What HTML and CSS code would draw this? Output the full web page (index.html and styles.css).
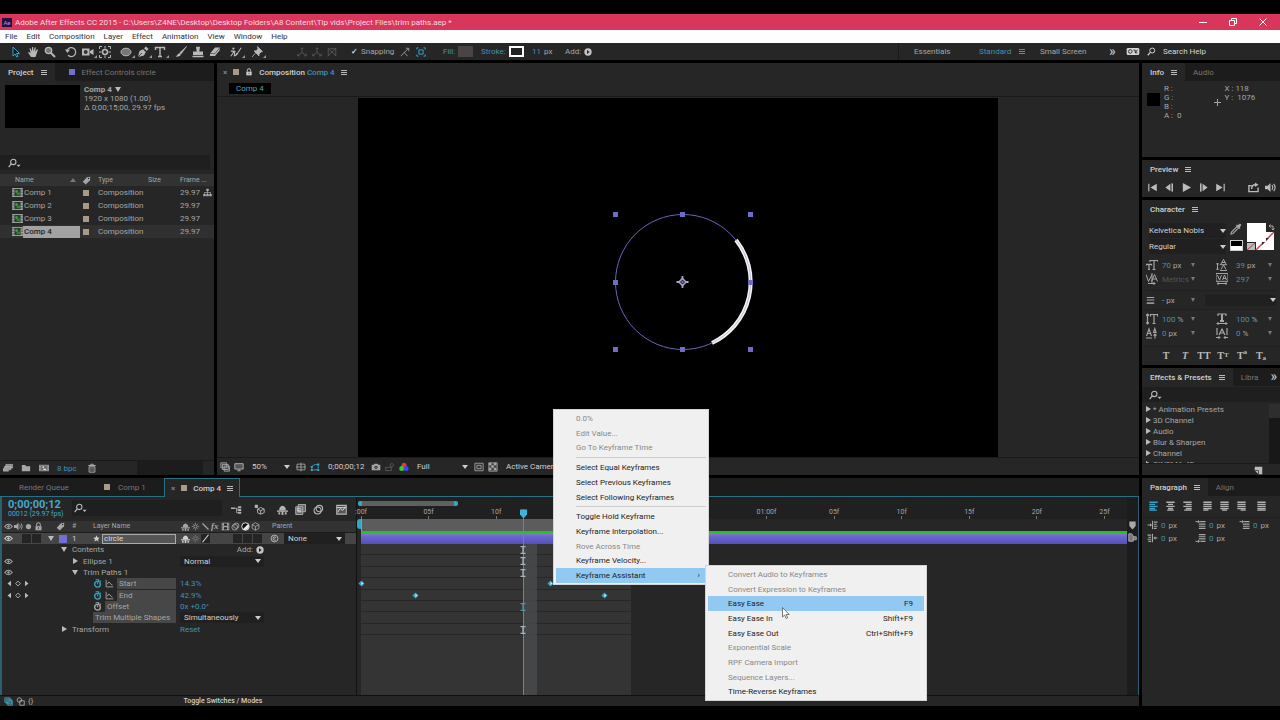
FILE: index.html
```html
<!DOCTYPE html>
<html lang="en">
<head>
  <meta charset="UTF-8" />
  <meta name="viewport" content="width=device-width, initial-scale=1.0"/>
  <title>Adobe After Effects CC 2015</title>
  <link rel="stylesheet" href="styles.css">
</head>
<body>
  <!-- icon sprite -->
  <svg class="sprite" aria-hidden="true">
    <symbol id="i-arrow" viewBox="0 0 12 12"><path d="M3 1v9l2.200-2 1.500 3 1.300-.7-1.500-2.800h3z" fill="#111" stroke="currentColor"/></symbol>
    <symbol id="i-hand" viewBox="0 0 12 12"><path d="M4 11L1 6.500l1-.6L3.600 7.300 2.500 2.500l1-.3L5 5.500V1h1.100l.4 4.300L7.800 1.300l1 .2-.6 4.300 1.900-2.600.9.500L9.500 8 8.500 11z" fill="currentColor"/></symbol>
    <symbol id="i-zoom" viewBox="0 0 12 12"><circle cx="4.500" cy="4.500" r="3.200" fill="#777" stroke="currentColor" stroke-width="1.300"/><path d="M7 7l4 4" stroke="currentColor" stroke-width="2"/></symbol>
    <symbol id="i-rotate" viewBox="0 0 12 12"><path d="M2.500 3.500A4.500 4.500 0 1 1 3 9.300" fill="none" stroke="currentColor" stroke-width="1.200"/><path d="M0 3.500h5L2.500 7z" fill="currentColor"/></symbol>
    <symbol id="i-camera" viewBox="0 0 12 12"><path d="M0 2.500h7.500v7H0zM8 5l3.500-2v6L8 7z" fill="currentColor"/><circle cx="3.700" cy="6" r="2" fill="#333"/></symbol>
    <symbol id="i-anchor" viewBox="0 0 12 12"><path d="M.5 3V.5H3M9 .5h2.500V3M11.500 9v2.500H9M3 11.500H.5V9" fill="none" stroke="currentColor"/><circle cx="6" cy="6" r="2.500" fill="none" stroke="currentColor" stroke-width="1.500"/><path d="M6 0v2.500M6 9.500V12M0 6h2.500M9.500 6H12" stroke="currentColor"/></symbol>
    <symbol id="i-ellipse" viewBox="0 0 12 12"><ellipse cx="6" cy="6" rx="5" ry="3.800" fill="#777" stroke="currentColor"/></symbol>
    <symbol id="i-pen" viewBox="0 0 12 12"><path d="M1 11l1.500-6L6 3.200 8.800 6 7 9.500z" fill="currentColor"/><path d="M7 2.200L9 .5 11.500 3 9.800 5z" fill="currentColor"/><path d="M1 11l4-4" stroke="#262626" stroke-width=".8"/></symbol>
    <symbol id="i-type" viewBox="0 0 12 12"><path d="M1.500 4V1.500h9V4M6 1.500v9M4 10.500h4" fill="none" stroke="currentColor" stroke-width="1.400"/></symbol>
    <symbol id="i-brush" viewBox="0 0 12 12"><path d="M11.500.5L6 8 4.800 6.800z" fill="currentColor" stroke="currentColor" stroke-width=".7"/><path d="M4.500 7.200L6 8.700C4.500 11 2.500 10.600.5 10.600 2.500 9.700 2.300 7.700 4.500 7.200z" fill="currentColor"/></symbol>
    <symbol id="i-stamp" viewBox="0 0 12 12"><path d="M4 .8h4L7.300 5.500H11V9H1V5.500h3.700zM.5 9.800h11v1.400H.5z" fill="currentColor"/></symbol>
    <symbol id="i-eraser" viewBox="0 0 12 12"><path d="M1 7.500L6 1.500h5l-.5 3L6 10H1z" fill="currentColor"/><path d="M1 7.500h5L11 1.500" stroke="#444" stroke-width=".7" fill="none"/></symbol>
    <symbol id="i-roto" viewBox="0 0 14 12"><circle cx="4" cy="2" r="1.300" fill="currentColor"/><path d="M1 5h3.500L3 8 1 11M4.500 5L5.500 8 5 11M4 5l2.500.8M13 1L8.500 8 6 10.500" stroke="currentColor" stroke-width="1.300" fill="none"/><path d="M7.500 7l1.500 1.500L6 11z" fill="currentColor"/></symbol>
    <symbol id="i-pin" viewBox="0 0 12 12"><path d="M6.500.5l5 5-1.500.5-2 2v2L3 5l2.500-.3L7 2.500zM4.500 7L1 11" fill="currentColor" stroke="currentColor" stroke-width=".8"/></symbol>
    <symbol id="i-axis" viewBox="0 0 12 12"><path d="M6 1v5.500L1.500 10M6 6.500L10.500 10M4.500 2.500L6 .8l1.500 1.700M.8 8v2.600h2.600M11.200 8v2.600H8.600" fill="none" stroke="currentColor"/></symbol>
    <symbol id="i-axis-box" viewBox="0 0 12 12"><path d="M1.500 1v9.500M1 1l5 5-5 5M6 6l5-5M6 6l5 5M10.500 1v9.500M3.500 2h6" fill="none" stroke="currentColor"/></symbol>
    <symbol id="i-snap" viewBox="0 0 12 12"><path d="M1 11l4-4.500L9 11M5 6.500L10 2M7 1.500h3.500V5" fill="none" stroke="currentColor"/></symbol>
    <symbol id="i-snapbox" viewBox="0 0 12 12"><path d="M1 3V1h2M9 1h2v2M11 9v2H9M3 11H1V9M3.500 3.500h5v5h-5z" fill="none" stroke="currentColor" stroke-width="1.200"/></symbol>
    <symbol id="i-go" viewBox="0 0 12 12"><circle cx="6" cy="6" r="5.500" fill="currentColor"/><path d="M4.500 3L8.500 6l-4 3z" fill="#262626"/></symbol>
    <symbol id="i-sync" viewBox="0 0 14 10"><rect x="0" y="1" width="14" height="8" rx="1.500" fill="currentColor"/><circle cx="4" cy="5" r="2" fill="none" stroke="#222"/><path d="M7.500 3.500h2v3M12 3L9.500 6.500H12" fill="none" stroke="#222"/></symbol>
    <symbol id="i-search" viewBox="0 0 12 12"><circle cx="7" cy="4.700" r="3.300" fill="none" stroke="currentColor" stroke-width="1.300"/><path d="M4.500 7.200L1 11" stroke="currentColor" stroke-width="1.500"/></symbol>
    <symbol id="i-find" viewBox="0 0 16 12"><circle cx="6.500" cy="4.700" r="3.300" fill="none" stroke="currentColor" stroke-width="1.300"/><path d="M4 7.200L.8 11" stroke="currentColor" stroke-width="1.500"/><path d="M10.500 8h5L13 11z" fill="currentColor"/></symbol>
    <symbol id="i-menu" viewBox="0 0 6 7"><path d="M0 1.500h6M0 3.500h6M0 5.500h6" stroke="currentColor"/></symbol>
    <symbol id="i-lock" viewBox="0 0 12 12"><path d="M2 5.500h8V11H2z" fill="currentColor"/><path d="M3.500 5.500V3.500a2.400 2.400 0 0 1 4.900 0V5.500" fill="none" stroke="currentColor" stroke-width="1.400"/><path d="M6 7v2.300" stroke="#262626"/></symbol>
    <symbol id="i-comp" viewBox="0 0 12 10"><path d="M0 0h12v10H0z" fill="#a5a5a5"/><path d="M2.500 1h7v8h-7z" fill="#24402c"/><circle cx="5" cy="4" r="1.500" fill="#4fa04a"/><path d="M5 5h4v3H5z" fill="#377c39"/><path d="M1 1v8M11 1v8" stroke="#333" stroke-dasharray="1.500 1.500"/></symbol>
    <symbol id="i-tag" viewBox="0 0 12 12"><path d="M1 7.500L6.500 1.500 11 1l-.3 4.500L5 11.300z" fill="currentColor"/><circle cx="8.800" cy="3.300" r=".9" fill="#262626"/></symbol>
    <symbol id="i-flow" viewBox="0 0 12 12"><path d="M4.300 1h3.400v3H4.300zM.3 8h3.400v3H.3zM8.300 8h3.400v3H8.300zM4.300 8h3.400v3H4.300z" fill="currentColor"/><path d="M6 4v4M2 8V6h8v2" stroke="currentColor" fill="none"/></symbol>
    <symbol id="i-footage" viewBox="0 0 14 12"><path d="M4 1h9.500v5H4zM2 4h9v4.500H2z" fill="#888" stroke="#ccc" stroke-width=".8"/><path d="M0 6.500h4v2h4V11H0z" fill="currentColor"/></symbol>
    <symbol id="i-folder" viewBox="0 0 12 12"><path d="M1 2.500h4L6.200 4H11v6H1z" fill="currentColor"/></symbol>
    <symbol id="i-newcomp" viewBox="0 0 14 12"><path d="M0 1.500h14v9H0z" fill="currentColor"/><path d="M3 2.500h8v7H3z" fill="#666"/><path d="M1.500 2v8M12.500 2v8" stroke="#333" stroke-dasharray="1.500 1.500"/><circle cx="6" cy="5" r="1.300" fill="#ddd"/><path d="M6 7h4v2H6z" fill="#ddd"/></symbol>
    <symbol id="i-trash" viewBox="0 0 12 12"><path d="M1.500 3h9M4.500 2.500v-1h3v1M2.500 4.500h7V11h-7z" fill="none" stroke="currentColor" stroke-width="1.200"/><path d="M4.500 5v5M6 5v5M7.500 5v5" stroke="currentColor" stroke-width=".7"/></symbol>
    <symbol id="i-layers" viewBox="0 0 12 12"><path d="M1 1h7v6H1zM3 3h7v6H3zM5 5h6.500v6H5z" fill="#444" stroke="currentColor"/></symbol>
    <symbol id="i-monitor" viewBox="0 0 12 12"><path d="M1 2h10v6.500H1zM4 10.500h4M6 8.500v2" fill="#555" stroke="currentColor" stroke-width="1.200"/></symbol>
    <symbol id="i-grid" viewBox="0 0 14 12"><path d="M1.500 2h11v8h-11zM7 0v12M0 6h14" fill="none" stroke="currentColor" stroke-width="1.200"/></symbol>
    <symbol id="i-mask" viewBox="0 0 14 12"><path d="M2.500 10V6Q4 2.500 8 2.500h3.500V10z" fill="none" stroke="currentColor" stroke-width="1.200"/><path d="M1 9h3v2.500H1zM10 9h3v2.500h-3zM10 1.200h3V4h-3zM1 4.500h3V7H1z" fill="currentColor"/></symbol>
    <symbol id="i-photo" viewBox="0 0 14 12"><path d="M1 3h3l1-1.500h4L10 3h3v7.500H1z" fill="currentColor"/><circle cx="7" cy="6.500" r="2.400" fill="#333"/><circle cx="7" cy="6.500" r="1" fill="currentColor"/></symbol>
    <symbol id="i-ghost" viewBox="0 0 14 12"><circle cx="9.500" cy="3.500" r="2.300" fill="none" stroke="currentColor"/><path d="M1 6.500h8v4.500H1z" fill="none" stroke="currentColor"/></symbol>
    <symbol id="i-rgb" viewBox="0 0 12 12"><circle cx="6" cy="3.800" r="3" fill="#e33"/><circle cx="3.300" cy="7.800" r="3" fill="#3c3"/><circle cx="8.500" cy="7.800" r="3" fill="#44e"/></symbol>
    <symbol id="i-region" viewBox="0 0 12 12"><path d="M1 1.500h10v9H1z" fill="#333" stroke="currentColor"/><path d="M3.500 4h5v4h-5z" fill="none" stroke="currentColor"/></symbol>
    <symbol id="i-checker" viewBox="0 0 12 12"><path d="M1 1h10v10H1z" fill="#444" stroke="currentColor"/><path d="M1 1h3v3H1zM7 1h3v3H7zM4 4h3v3H4zM1 7h3v3H1zM7 7h3v3H7z" fill="currentColor"/></symbol>
    <symbol id="i-eye" viewBox="0 0 12 12"><path d="M1 6q5-6 10 0-5 6-10 0z" fill="none" stroke="currentColor" stroke-width="1.500"/><circle cx="6" cy="6" r="1.600" fill="currentColor"/></symbol>
    <symbol id="i-speaker" viewBox="0 0 12 12"><path d="M0 4h3l3-3v10L3 8H0z" fill="currentColor"/><path d="M7.500 3.500q2 2.500 0 5M9.500 2q3 4 0 8" fill="none" stroke="currentColor" stroke-width="1.200"/></symbol>
    <symbol id="i-solo" viewBox="0 0 12 12"><circle cx="6" cy="6" r="3.500" fill="currentColor"/></symbol>
    <symbol id="i-star" viewBox="0 0 12 12"><path d="M6 .5l1.600 3.700 4 .3-3 2.700.9 4L6 9.100l-3.500 2.100.9-4-3-2.700 4-.3z" fill="currentColor"/></symbol>
    <symbol id="i-shy" viewBox="0 0 12 12"><path d="M0 7h12v1.500H0z" fill="currentColor"/><path d="M2.500 7V4.500Q6-.5 9.500 4.500V7zM5 8h2v4H5zM1.500 9h2v2.500h-2zM8.500 9h2v2.500h-2z" fill="currentColor"/></symbol>
    <symbol id="i-sun" viewBox="0 0 12 12"><circle cx="6" cy="6" r="2.200" fill="none" stroke="currentColor" stroke-width="1.200"/><path d="M6 1v1.500M6 9.500V11M1 6h1.500M9.500 6H11M2.500 2.500l1 1M8.500 8.500l1 1M9.500 2.500l-1 1M2.500 9.500l1-1" stroke="currentColor"/></symbol>
    <symbol id="i-slash" viewBox="0 0 12 12"><path d="M10 1L2 11" stroke="currentColor" stroke-width="1.600"/></symbol>
    <symbol id="i-backslash" viewBox="0 0 12 12"><path d="M2 2l8 8" stroke="currentColor" stroke-width="1.600"/></symbol>
    <symbol id="i-film" viewBox="0 0 12 12"><path d="M1 1h10v10H1z" fill="currentColor"/><path d="M4 2h4v3H4zM4 7h4v3H4z" fill="#222"/><path d="M2.300 2v8M9.700 2v8" stroke="#222" stroke-dasharray="1 1"/></symbol>
    <symbol id="i-blur" viewBox="0 0 12 12"><circle cx="7" cy="5" r="3.500" fill="none" stroke="currentColor" stroke-width="1.200"/><circle cx="5" cy="7" r="3.800" fill="none" stroke="currentColor" stroke-width="1.200"/></symbol>
    <symbol id="i-half" viewBox="0 0 12 12"><circle cx="6" cy="6" r="5" fill="#111" stroke="#eee" stroke-width="1.200"/><path d="M2.500 9.500A5 5 0 0 0 9.500 2.500z" fill="#eee"/></symbol>
    <symbol id="i-cube" viewBox="0 0 12 12"><path d="M6 1l4.500 2.500v5L6 11 1.500 8.500v-5zM1.500 3.500L6 6l4.500-2.500M6 6v5" fill="none" stroke="currentColor" stroke-width="1.100"/></symbol>
    <symbol id="i-tree" viewBox="0 0 14 12"><path d="M0 3.500h5v2H0zM9 2h4v2.500H9zM9 5.500h4V8H9zM9 9h4v2.500H9z" fill="currentColor"/><path d="M5 4.500h4M7 4.500v5.700h2M7 6.700h2" fill="none" stroke="currentColor"/></symbol>
    <symbol id="i-draft" viewBox="0 0 14 14"><path d="M8.500 4.500l4.500 2v4.500l-4.500 2-4-2V6.500zM4.500 6.500l4 2 4.500-2M8.500 8.500V13" fill="none" stroke="currentColor" stroke-width="1.200"/><path d="M1 1h4v4H1z" fill="currentColor"/></symbol>
    <symbol id="i-frames" viewBox="0 0 12 12"><path d="M3.500.5h8v8h-8zM.8 3h7.700v8.500H.8z" fill="#666" stroke="currentColor"/><path d="M2.500 5h4v2h-4zM2.500 8.500h4" stroke="#ddd" fill="none" stroke-width=".8"/></symbol>
    <symbol id="i-graph" viewBox="0 0 12 12"><path d="M.8 1.500h10.400v9.500H.8z" fill="#555" stroke="currentColor" stroke-width="1.200"/><path d="M2 9q3-6 4-3t4-3M1 4h10" fill="none" stroke="#ddd"/></symbol>
    <symbol id="i-watch" viewBox="0 0 12 12"><circle cx="6" cy="7" r="3.800" fill="none" stroke="currentColor" stroke-width="1.800"/><path d="M6 7V4.500M3.500 1h4v2M9 2l1.500 1.500" stroke="currentColor" stroke-width="1.400" fill="none"/></symbol>
    <symbol id="i-curve" viewBox="0 0 12 12"><path d="M1.500 1v9.500H11M3 7q2-5 3.500-2T10 8" fill="none" stroke="currentColor" stroke-width="1.200"/></symbol>
    <symbol id="i-spiral" viewBox="0 0 12 12"><circle cx="6" cy="6" r="4.500" fill="none" stroke="currentColor"/><path d="M6 6q2-1 1-2-3-1-3 2t3.500 2.500" fill="none" stroke="currentColor"/></symbol>
    <symbol id="i-kfnav" viewBox="0 0 24 8"><path d="M4 .8v6.400L0 4zM20 .8v6.400L24 4z" fill="currentColor"/><path d="M12 1.300L14.700 4 12 6.700 9.300 4z" fill="none" stroke="currentColor"/></symbol>
    <symbol id="i-modes" viewBox="0 0 12 12"><circle cx="4.500" cy="4" r="3" fill="none" stroke="currentColor" stroke-width="1.200"/><path d="M5 5h6v6H5z" fill="none" stroke="currentColor" stroke-width="1.200"/></symbol>
    <symbol id="i-switch" viewBox="0 0 12 12"><path d="M1 1h4l2 3v7H1zM7 5h4v4H7" fill="#777" stroke="currentColor" stroke-width="1.200"/></symbol>
    <symbol id="i-first" viewBox="0 0 12 12"><path d="M2 2v8M10 3v6L5 6z" stroke="currentColor" stroke-width="1.300" fill="currentColor"/></symbol>
    <symbol id="i-back" viewBox="0 0 12 12"><path d="M7 2v8L1.500 6z" fill="currentColor"/><path d="M9 1.500v9" stroke="currentColor" stroke-width="1.700"/></symbol>
    <symbol id="i-play" viewBox="0 0 12 12"><path d="M2 1l9 5-9 5z" fill="currentColor"/></symbol>
    <symbol id="i-fwd" viewBox="0 0 12 12"><path d="M5 2v8l5.500-4z" fill="currentColor"/><path d="M3 1.500v9" stroke="currentColor" stroke-width="1.700"/></symbol>
    <symbol id="i-last" viewBox="0 0 12 12"><path d="M10 2v8M2 3v6L7 6z" stroke="currentColor" stroke-width="1.300" fill="currentColor"/></symbol>
    <symbol id="i-loop" viewBox="0 0 12 12"><path d="M4 4H1v6.500h10V6M4 7.500Q4 3 8 3" fill="none" stroke="currentColor" stroke-width="1.500"/><path d="M7.500.5L11.500 3 7.500 5.500z" fill="currentColor"/></symbol>
    <symbol id="i-dropper" viewBox="0 0 12 12"><path d="M1 11l.5-2L7 3.500 8.500 5 3 10.500z" fill="none" stroke="currentColor" stroke-width="1.100"/><path d="M6 2.500L9.500 6l1-1-.8-.8L11.500 2 10 .5 7.800 2.300 7 1.500z" fill="currentColor"/></symbol>
    <symbol id="i-tt" viewBox="0 0 12 12"><path d="M4 3V1.500h8V3M8 1.500v9M6.500 10.500h3M.5 6.500V5.300h5v1.200M3 5.500v5M2 10.500h2" fill="none" stroke="currentColor" stroke-width="1.200"/></symbol>
    <symbol id="i-lead" viewBox="0 0 12 12"><path d="M5 5l2.500-4.500L10 5M5.800 3.500h3.500M5 10.500L7.500 6l2.500 4.500M4 11.500h7M4 5.700h7M1.500 4v7M0 5.500L1.500 4 3 5.500M0 9.500L1.500 11 3 9.500" fill="none" stroke="currentColor"/></symbol>
    <symbol id="i-kern" viewBox="0 0 12 12"><path d="M0 1.500l2.500 7 3.500-7M5.500 8.500l3-7 3 7M6.500 6h4M6 0v10M2 10.500h7M7.500 9l1.500 1.500L7.500 12" fill="none" stroke="currentColor"/></symbol>
    <symbol id="i-track" viewBox="0 0 12 12"><path d="M0 .5h12v7.800H0z" fill="none" stroke="currentColor"/><path d="M1.500 2l2 5 2-5M6.500 7l2-5 2 5M7 5.500h3M1 10.500h10M2.500 9.300L1 10.500 2.500 11.700M9.500 9.300l1.500 1.200-1.500 1.200" fill="none" stroke="currentColor"/></symbol>
    <symbol id="i-lines" viewBox="0 0 12 12"><path d="M1 2h10M1 5.300h10" stroke="currentColor" stroke-width="1.500"/><path d="M1 9.500h10" stroke="currentColor" stroke-width="2"/></symbol>
    <symbol id="i-vscale" viewBox="0 0 12 12"><path d="M4.500 3.500V1.500h7v2M8 1.500v9M6.500 10.500h3M1.500 1v10M0 2.500L1.500 1 3 2.500M0 9.500L1.500 11 3 9.500" fill="none" stroke="currentColor" stroke-width="1.200"/></symbol>
    <symbol id="i-hscale" viewBox="0 0 12 12"><path d="M2 3V1h8v2" fill="none" stroke="currentColor" stroke-width="1.200"/><path d="M6 1v7M4 8h4" stroke="currentColor" stroke-width="2"/><path d="M1 10.500h10M2.500 9L1 10.500 2.500 12M9.500 9l1.500 1.500L9.500 12" fill="none" stroke="currentColor"/></symbol>
    <symbol id="i-base" viewBox="0 0 12 12"><path d="M.5 9l2.500-7 2.500 7M1.500 6.500h3M0 11h6M7.500 5.500l1.300-4 1.300 4zM9 7v4.500M7.500 8.500L9 7l1.500 1.500" fill="none" stroke="currentColor" stroke-width="1.100"/></symbol>
    <symbol id="i-tsume" viewBox="0 0 12 12"><path d="M1 1v7M11 1v7M3 8l3-6 3 6M4 6h4" stroke="currentColor" stroke-width="1.200" fill="none"/><path d="M0 10.500h4M8 10.500h4M2.500 9L4 10.500 2.500 12M9.500 9L8 10.500 9.500 12" fill="none" stroke="currentColor"/></symbol>
    <symbol id="i-al" viewBox="0 0 12 12"><path d="M1 1.500h10M1 4h7M1 6.500h10M1 9h7M1 11h9" stroke="currentColor" stroke-width="1.600"/></symbol>
    <symbol id="i-ac" viewBox="0 0 12 12"><path d="M1 1.500h10M3 4h6M1 6.500h10M3 9h6M2 11h8" stroke="currentColor" stroke-width="1.600"/></symbol>
    <symbol id="i-ar" viewBox="0 0 12 12"><path d="M1 1.500h10M4 4h7M1 6.500h10M4 9h7M2 11h9" stroke="currentColor" stroke-width="1.600"/></symbol>
    <symbol id="i-jl" viewBox="0 0 12 12"><path d="M1 1.500h10M1 4h10M1 6.500h10M1 9h10M1 11h6" stroke="currentColor" stroke-width="1.600"/></symbol>
    <symbol id="i-jc" viewBox="0 0 12 12"><path d="M1 1.500h10M1 4h10M1 6.500h10M1 9h10M3 11h6" stroke="currentColor" stroke-width="1.600"/></symbol>
    <symbol id="i-jr" viewBox="0 0 12 12"><path d="M1 1.500h10M1 4h10M1 6.500h10M1 9h10M5 11h6" stroke="currentColor" stroke-width="1.600"/></symbol>
    <symbol id="i-jf" viewBox="0 0 12 12"><path d="M1 1.500h10M1 4h10M1 6.500h10M1 9h10M1 11h10" stroke="currentColor" stroke-width="1.600"/></symbol>
    <symbol id="i-indent" viewBox="0 0 12 12"><path d="M0 6h4M6 1v10" stroke="currentColor" stroke-width="1.200"/><path d="M3 4l2.500 2L3 8z" fill="currentColor"/><path d="M7.500 2.500H12M7.500 5H11M7.500 7.500H12M7.500 10H11" stroke="currentColor" stroke-width="1.300"/></symbol>
    <symbol id="i-outdent" viewBox="0 0 12 12"><path d="M12 6H8M6 1v10" stroke="currentColor" stroke-width="1.200"/><path d="M9.500 4L7 6l2.500 2z" fill="currentColor"/><path d="M0 2.500h4.500M1 5h3.500M0 7.500h4.500M1 10h3.500" stroke="currentColor" stroke-width="1.300"/></symbol>
    <symbol id="i-before" viewBox="0 0 12 12"><path d="M0 2h4" stroke="currentColor" stroke-width="1.200"/><path d="M3 0l2.500 2L3 4z" fill="currentColor"/><path d="M5.500 2H12M4 5h8M4 7.500h8M4 10h8" stroke="currentColor" stroke-width="1.400"/></symbol>
    <symbol id="i-after" viewBox="0 0 12 12"><path d="M0 10h4" stroke="currentColor" stroke-width="1.200"/><path d="M3 8l2.500 2L3 12z" fill="currentColor"/><path d="M4 2h8M4 4.500h8M4 7h8M6 10h6" stroke="currentColor" stroke-width="1.400"/></symbol>
    <symbol id="i-preset" viewBox="0 0 12 12"><path d="M1 1h10v10H6L1 6z" fill="currentColor"/><path d="M1 6h5v5" fill="none" stroke="#333"/></symbol>
    <symbol id="i-key" viewBox="0 0 8 8"><path d="M4 .5L7.500 4 4 7.500.5 4z" fill="#2fa7cc"/><path d="M4 2v4l2-2z" fill="#e8f4f8"/></symbol>
    <symbol id="i-ibeam" viewBox="0 0 6 8"><path d="M.5.700h5M.5 7.300h5M3 .7v6.600" stroke="currentColor" stroke-width="1.300"/></symbol>
    <symbol id="i-marker" viewBox="0 0 8 10"><path d="M.5.500h7v5L4 9.500.5 5.500z" fill="currentColor"/></symbol>
    <symbol id="i-plus" viewBox="0 0 7 7"><path d="M3.500 0v7M0 3.500h7" stroke="currentColor"/></symbol>
  </svg>

  <header class="titlebar">
    <span class="app-logo">Ae</span>
    <h1>Adobe After Effects CC 2015 - C:\Users\Z4NE\Desktop\Desktop Folders\A8 Content\Tip vids\Project Files\trim paths.aep *</h1>
    <div class="window-buttons">
      <button aria-label="Minimize"><svg viewBox="0 0 10 10"><path d="M1 5.500h8" stroke="currentColor"/></svg></button>
      <button aria-label="Restore"><svg viewBox="0 0 10 10"><path d="M1.500 3.500h5v5h-5zM3.500 3.500v-2h5v5h-2" fill="none" stroke="currentColor"/></svg></button>
      <button aria-label="Close"><svg viewBox="0 0 10 10"><path d="M1.500 1.500l7 7M8.500 1.500l-7 7" stroke="currentColor"/></svg></button>
    </div>
  </header>

  <nav class="menubar">
    <button>File</button><button>Edit</button><button>Composition</button><button>Layer</button><button>Effect</button><button>Animation</button><button>View</button><button>Window</button><button>Help</button>
  </nav>

  <div class="toolbar">
    <div class="tools">
      <button class="on" aria-label="Selection"><svg><use href="#i-arrow"/></svg></button>
      <button aria-label="Hand"><svg><use href="#i-hand"/></svg></button>
      <button aria-label="Zoom"><svg><use href="#i-zoom"/></svg></button>
    </div>
    <div class="tools">
      <button aria-label="Rotation"><svg><use href="#i-rotate"/></svg></button>
      <button class="more" aria-label="Camera"><svg><use href="#i-camera"/></svg></button>
      <button aria-label="Pan behind"><svg><use href="#i-anchor"/></svg></button>
    </div>
    <div class="tools">
      <button class="more" aria-label="Ellipse"><svg><use href="#i-ellipse"/></svg></button>
      <button class="more" aria-label="Pen"><svg><use href="#i-pen"/></svg></button>
      <button class="more" aria-label="Type"><svg><use href="#i-type"/></svg></button>
    </div>
    <div class="tools">
      <button aria-label="Brush"><svg><use href="#i-brush"/></svg></button>
      <button aria-label="Clone stamp"><svg><use href="#i-stamp"/></svg></button>
      <button aria-label="Eraser"><svg><use href="#i-eraser"/></svg></button>
    </div>
    <div class="tools">
      <button class="more" aria-label="Roto brush"><svg><use href="#i-roto"/></svg></button>
    </div>
    <div class="tools">
      <button class="more" aria-label="Puppet pin"><svg><use href="#i-pin"/></svg></button>
    </div>
    <div class="axes">
      <button aria-label="Local axis"><svg><use href="#i-axis"/></svg></button>
      <button aria-label="World axis"><svg><use href="#i-axis"/></svg></button>
      <button aria-label="View axis"><svg><use href="#i-axis-box"/></svg></button>
    </div>
    <label class="snapping"><input type="checkbox" checked> Snapping</label>
    <div class="snap-icons">
      <button aria-label="Snap edges"><svg><use href="#i-snap"/></svg></button>
      <button class="on" aria-label="Snap box"><svg><use href="#i-snapbox"/></svg></button>
    </div>
    <div class="paint fill"><a href="#">Fill:</a><button class="swatch-fill" aria-label="Fill color"></button></div>
    <div class="paint stroke"><a href="#">Stroke:</a><button class="swatch-stroke" aria-label="Stroke color"></button></div>
    <div class="paint width"><span class="num">11</span> px</div>
    <div class="paint">Add: <svg class="go"><use href="#i-go"/></svg></div>
    <div class="workspaces">
      <button class="ws-essentials">Essentials</button>
      <button class="ws-standard">Standard <svg class="burger"><use href="#i-menu"/></svg></button>
      <button class="ws-small">Small Screen</button>
      <button class="ws-more">»</button>
    </div>
    <div class="help">
      <svg class="sync"><use href="#i-sync"/></svg>
      <svg><use href="#i-search"/></svg>
      <input type="text" value="Search Help" aria-label="Search Help">
    </div>
  </div>

  <div class="workspace">
    <div class="main-area">
      <div class="upper">
        <section class="panel project">
          <div class="tabs">
            <button class="tab active">Project <svg class="burger"><use href="#i-menu"/></svg></button>
            <button class="tab"><i class="chip purple"></i>Effect Controls circle</button>
          </div>
          <div class="comp-info">
            <div class="thumb"></div>
            <p><b>Comp 4 <i class="tri down"></i></b><br>1920 x 1080 (1.00)<br>Δ 0;00;15;00, 29.97 fps</p>
          </div>
          <label class="search"><svg class="find"><use href="#i-find"/></svg><input type="text" aria-label="Search project"></label>
          <table class="items">
            <thead>
              <tr><th class="c-name">Name <i class="sort"></i></th><th class="c-tag"><svg><use href="#i-tag"/></svg></th><th class="c-type">Type</th><th class="c-size">Size</th><th class="c-rate">Frame ...</th><th></th></tr>
            </thead>
            <tbody>
              <tr><td><svg class="comp-icon"><use href="#i-comp"/></svg><span>Comp 1</span></td><td><i class="chip"></i></td><td>Composition</td><td></td><td>29.97</td><td><svg><use href="#i-flow"/></svg></td></tr>
              <tr><td><svg class="comp-icon"><use href="#i-comp"/></svg><span>Comp 2</span></td><td><i class="chip"></i></td><td>Composition</td><td></td><td>29.97</td><td></td></tr>
              <tr><td><svg class="comp-icon"><use href="#i-comp"/></svg><span>Comp 3</span></td><td><i class="chip"></i></td><td>Composition</td><td></td><td>29.97</td><td></td></tr>
              <tr class="selected"><td><svg class="comp-icon"><use href="#i-comp"/></svg><span>Comp 4</span></td><td><i class="chip"></i></td><td>Composition</td><td></td><td>29.97</td><td></td></tr>
            </tbody>
          </table>
          <footer class="panel-foot project-foot">
            <button aria-label="Interpret footage"><svg><use href="#i-footage"/></svg></button>
            <button aria-label="New folder"><svg><use href="#i-folder"/></svg></button>
            <button aria-label="New composition"><svg><use href="#i-newcomp"/></svg></button>
            <a class="bpc" href="#">8 bpc</a>
            <button aria-label="Delete"><svg><use href="#i-trash"/></svg></button>
            <div class="foot-scroll"></div>
          </footer>
        </section>

        <section class="panel viewer">
          <div class="viewer-tab">
            <span class="close">×</span><i class="chip"></i><svg class="lock"><use href="#i-lock"/></svg>
            <span>Composition <a href="#">Comp 4</a></span><svg class="burger"><use href="#i-menu"/></svg>
          </div>
          <div class="crumbs"><button>Comp 4</button></div>
          <div class="stage">
            <svg class="canvas" viewBox="0 0 640 359" preserveAspectRatio="xMidYMin slice">
              <rect width="640" height="359" fill="#000"/>
              <circle cx="325" cy="184" r="67.500" fill="none" stroke="#6a66b8"/>
              <path d="M378 142A67.500 67.500 0 0 1 354 245" fill="none" stroke="#f4f4f4" stroke-width="4"/>
              <path d="M378 142A67.500 67.500 0 0 1 354 245" fill="none" stroke="#a5a2c4" stroke-width=".7"/>
              <g fill="#6f6cc4">
                <rect x="255" y="114" width="5" height="5"/><rect x="322" y="114" width="5" height="5"/><rect x="390" y="114" width="5" height="5"/>
                <rect x="255" y="182" width="5" height="5"/><rect x="390" y="182" width="5" height="5"/>
                <rect x="255" y="249" width="5" height="5"/><rect x="322" y="249" width="5" height="5"/><rect x="390" y="249" width="5" height="5"/>
              </g>
              <g stroke="#a9a5cc" fill="none"><path d="M324.500 180.500l3.500 3.500-3.500 3.500-3.500-3.500z" stroke-width="1.600"/><path d="M324.500 178v3M324.500 187v3M318.500 184h3M327.500 184h3" stroke-width="1.800"/><circle cx="324.500" cy="184" r=".8"/></g>
            </svg>
          </div>
          <footer class="panel-foot viewer-foot">
            <button aria-label="Always preview"><svg><use href="#i-layers"/></svg></button>
            <button aria-label="Monitor"><svg><use href="#i-monitor"/></svg></button>
            <label class="pick zoom-pick"><select aria-label="Magnification"><option>50%</option></select></label>
            <button aria-label="Grid"><svg><use href="#i-grid"/></svg></button>
            <button class="on" aria-label="Mask visibility"><svg><use href="#i-mask"/></svg></button>
            <span class="foot-time">0;00;00;12</span>
            <button aria-label="Snapshot"><svg><use href="#i-photo"/></svg></button>
            <button class="dim" aria-label="Show snapshot"><svg><use href="#i-ghost"/></svg></button>
            <button aria-label="Channels"><svg><use href="#i-rgb"/></svg></button>
            <label class="pick res-pick"><select aria-label="Resolution"><option>Full</option></select></label>
            <button aria-label="Region"><svg><use href="#i-region"/></svg></button>
            <button aria-label="Transparency grid"><svg><use href="#i-checker"/></svg></button>
            <label class="pick cam-pick"><select aria-label="View"><option>Active Camera</option></select></label>
          </footer>
        </section>
      </div>

      <section class="timeline">
        <div class="tl-tabs">
          <button class="tl-tab queue">Render Queue</button>
          <button class="tl-tab comp1"><i class="chip"></i>Comp 1</button>
          <button class="tl-tab current"><span class="close">×</span><i class="chip"></i>Comp 4 <svg class="burger"><use href="#i-menu"/></svg></button>
        </div>
        <div class="tl-body">
          <div class="tl-left">
            <div class="tl-head">
              <div class="timecode"><b>0;00;00;12</b><small>00012 (29.97 fps)</small></div>
              <label class="search"><svg class="find"><use href="#i-find"/></svg><input type="text" aria-label="Search layers"></label>
              <div class="tl-buttons">
                <button aria-label="Mini flowchart"><svg><use href="#i-tree"/></svg></button>
                <button aria-label="Draft 3D"><svg><use href="#i-draft"/></svg></button>
                <button aria-label="Hide shy layers"><svg><use href="#i-shy"/></svg></button>
                <button aria-label="Frame blending"><svg><use href="#i-frames"/></svg></button>
                <button aria-label="Motion blur"><svg><use href="#i-blur"/></svg></button>
                <button aria-label="Graph editor"><svg><use href="#i-graph"/></svg></button>
              </div>
            </div>
            <div class="tl-row cols">
              <div class="av"><svg><use href="#i-eye"/></svg><svg><use href="#i-speaker"/></svg><svg><use href="#i-solo"/></svg><svg><use href="#i-lock"/></svg></div>
              <div class="label"><svg><use href="#i-tag"/></svg></div>
              <div class="idx">#</div>
              <div class="name">Layer Name</div>
              <div class="switches"><svg><use href="#i-shy"/></svg><svg><use href="#i-sun"/></svg><svg><use href="#i-backslash"/></svg><em>fx</em><svg><use href="#i-film"/></svg><svg><use href="#i-blur"/></svg><svg><use href="#i-half"/></svg><svg><use href="#i-cube"/></svg></div>
              <div class="parent">Parent</div>
            </div>
            <div class="tl-row layer">
              <div class="av"><svg><use href="#i-eye"/></svg><s></s><i class="cell"></i><i class="cell"></i></div>
              <div class="label"><span class="tri down"></span><i class="chip purple"></i></div>
              <div class="idx">1</div>
              <div class="name"><svg><use href="#i-star"/></svg><input type="text" value="circle" aria-label="Layer name"></div>
              <div class="switches"><svg><use href="#i-shy"/></svg><svg class="faint"><use href="#i-sun"/></svg><svg class="cell"><use href="#i-slash"/></svg><s></s><s></s><i class="cell"></i><i class="cell"></i><i class="cell"></i></div>
              <div class="parent"><svg><use href="#i-spiral"/></svg><label class="pick"><select aria-label="Parent"><option>None</option></select></label></div>
            </div>
            <div class="props">
              <div class="prop"><div class="av"></div><div class="pname in1"><span class="tri down"></span>Contents</div><div class="pval add">Add: <svg class="go"><use href="#i-go"/></svg></div></div>
              <div class="prop"><div class="av"><svg><use href="#i-eye"/></svg></div><div class="pname in2"><span class="tri"></span>Ellipse 1</div><div class="pval"><label class="pick"><select aria-label="Blend mode"><option>Normal</option></select></label></div></div>
              <div class="prop"><div class="av"><svg><use href="#i-eye"/></svg></div><div class="pname in2"><span class="tri down"></span>Trim Paths 1</div><div class="pval"></div></div>
              <div class="prop"><div class="av"><svg class="kfnav"><use href="#i-kfnav"/></svg></div><div class="pname in3"><svg class="on"><use href="#i-watch"/></svg><svg><use href="#i-curve"/></svg><span class="hl">Start</span></div><div class="pval"><a href="#">14.3%</a></div></div>
              <div class="prop"><div class="av"><svg class="kfnav"><use href="#i-kfnav"/></svg></div><div class="pname in3"><svg class="on"><use href="#i-watch"/></svg><svg><use href="#i-curve"/></svg><span class="hl">End</span></div><div class="pval"><a href="#">42.9%</a></div></div>
              <div class="prop"><div class="av"></div><div class="pname in3"><svg><use href="#i-watch"/></svg><span class="hl">Offset</span></div><div class="pval"><a href="#">0x +0.0°</a></div></div>
              <div class="prop"><div class="av"></div><div class="pname in3"><span class="hl">Trim Multiple Shapes</span></div><div class="pval"><label class="pick"><select aria-label="Trim Multiple Shapes"><option>Simultaneously</option></select></label></div></div>
              <div class="prop"><div class="av"></div><div class="pname in1"><span class="tri"></span>Transform</div><div class="pval"><a href="#">Reset</a></div></div>
            </div>
          </div>

          <div class="tl-right">
            <div class="nav"><div class="nav-bar"></div></div>
            <div class="ruler">
              <span>:00f</span><span>05f</span><span>10f</span><span></span><span></span><span></span><span>01:00f</span><span>05f</span><span>10f</span><span>15f</span><span>20f</span><span>25f</span>
            </div>
            <div class="work-area"><div></div></div>
            <div class="cache"></div>
            <div class="layer-bar"></div>
            <div class="tracks">
              <div class="track-rows"><div></div><div></div><div></div><div></div><div></div><div></div><div></div><div></div></div>
              <div class="frame-now" style="--f: 12"></div>
              <svg class="key r4" style="--f: 0"><use href="#i-key"/></svg>
              <svg class="key r4" style="--f: 14"><use href="#i-key"/></svg>
              <svg class="key r5" style="--f: 4"><use href="#i-key"/></svg>
              <svg class="key r5" style="--f: 18"><use href="#i-key"/></svg>
              <svg class="ibeam r1" style="--f: 12"><use href="#i-ibeam"/></svg>
              <svg class="ibeam r2" style="--f: 12"><use href="#i-ibeam"/></svg>
              <svg class="ibeam r3" style="--f: 12"><use href="#i-ibeam"/></svg>
              <svg class="ibeam r6" style="--f: 12"><use href="#i-ibeam"/></svg>
              <svg class="ibeam r8" style="--f: 12"><use href="#i-ibeam"/></svg>
            </div>
            <div class="playhead" style="--f: 12"><svg><use href="#i-marker"/></svg></div>
          </div>
          <div class="tl-gutter">
            <svg><use href="#i-marker"/></svg>
            <svg><use href="#i-switch"/></svg>
          </div>
        </div>
        <footer class="tl-foot">
          <button class="on" aria-label="Layer switches"><svg><use href="#i-layers"/></svg></button>
          <button aria-label="Transfer controls"><svg><use href="#i-modes"/></svg></button>
          <button aria-label="In and out">{}</button>
          <button class="toggle">Toggle Switches / Modes</button>
        </footer>
      </section>
    </div>

    <aside class="side">
      <section class="panel info">
        <div class="tabs">
          <button class="tab active">Info <svg class="burger"><use href="#i-menu"/></svg></button>
          <button class="tab">Audio</button>
        </div>
        <div class="info-body">
          <div class="info-chip"></div>
          <p>R :<br>G :<br>B :<br>A :&nbsp; 0</p>
          <svg class="plus"><use href="#i-plus"/></svg>
          <p>X : 118<br>Y :&nbsp; 1076</p>
        </div>
      </section>

      <section class="panel preview">
        <h2>Preview <svg class="burger"><use href="#i-menu"/></svg></h2>
        <div class="transport">
          <button aria-label="First frame"><svg><use href="#i-first"/></svg></button>
          <button aria-label="Previous frame"><svg><use href="#i-back"/></svg></button>
          <button aria-label="Play"><svg><use href="#i-play"/></svg></button>
          <button aria-label="Next frame"><svg><use href="#i-fwd"/></svg></button>
          <button aria-label="Last frame"><svg><use href="#i-last"/></svg></button>
          <button class="loop" aria-label="Loop"><svg><use href="#i-loop"/></svg></button>
          <button aria-label="Mute"><svg><use href="#i-speaker"/></svg></button>
        </div>
      </section>

      <section class="panel character">
        <h2>Character <svg class="burger"><use href="#i-menu"/></svg></h2>
        <div class="font-row">
          <div class="font-picks">
            <label class="pick"><select aria-label="Font family"><option>Kelvetica Nobis</option></select></label>
            <label class="pick"><select aria-label="Font style"><option>Regular</option></select></label>
          </div>
          <div class="font-mini"><svg><use href="#i-dropper"/></svg><i class="bw"></i></div>
          <svg class="colors" viewBox="0 0 28 28">
            <path d="M9 9h18v18H9z" fill="#fff"/><path d="M9 27L27 9" stroke="#d23a55" stroke-width="1.300"/><path d="M15 15h7l-7 7z" fill="#262626"/>
            <path d="M0 20h8v7H0z" fill="#bbb"/><path d="M0 27l8-7" stroke="#c33"/>
            <path d="M0 0h19v19H0z" fill="#fff"/><path d="M22 3h4v4M23.500 1.500L22 3l1.500 1.500M24.500 5.500L26 7l1.500-1.500" fill="none" stroke="#aaa"/>
          </svg>
        </div>
        <div class="char-grid">
          <svg><use href="#i-tt"/></svg><span><b>70</b> px</span><i class="drop"></i><svg><use href="#i-lead"/></svg><span><b>39</b> px</span><i class="drop"></i>
          <svg><use href="#i-kern"/></svg><span class="off">Metrics</span><i class="drop"></i><svg><use href="#i-track"/></svg><span><b>297</b></span><i class="drop"></i>
        </div>
        <div class="char-stroke">
          <svg><use href="#i-lines"/></svg><span>- px</span><i class="drop"></i>
          <label class="pick"><select aria-label="Stroke order"><option></option></select></label>
        </div>
        <div class="char-grid">
          <svg><use href="#i-vscale"/></svg><span><b>100</b> %</span><i class="drop"></i><svg><use href="#i-hscale"/></svg><span><b>100</b> %</span><i class="drop"></i>
          <svg><use href="#i-base"/></svg><span><b>0</b> px</span><i class="drop"></i><svg><use href="#i-tsume"/></svg><span><b>0</b> %</span><i class="drop"></i>
        </div>
        <div class="faux">
          <button><b>T</b></button><button><i>T</i></button><button>TT</button><button>T<small>T</small></button><button>T<sup>a</sup></button><button>T<sub>a</sub></button>
        </div>
      </section>

      <section class="panel effects">
        <div class="tabs">
          <button class="tab active">Effects &amp; Presets <svg class="burger"><use href="#i-menu"/></svg></button>
          <button class="tab">Libra</button>
          <span class="tabs-more">»</span>
        </div>
        <label class="search"><svg class="find"><use href="#i-find"/></svg><input type="text" aria-label="Search effects"></label>
        <div class="effects-list">
          <ul>
            <li>* Animation Presets</li>
            <li>3D Channel</li>
            <li>Audio</li>
            <li>Blur &amp; Sharpen</li>
            <li>Channel</li>
            <li>CINEMA 4D</li>
          </ul>
          <div class="scroll"></div>
        </div>
        <footer><svg><use href="#i-preset"/></svg></footer>
      </section>

      <section class="panel paragraph">
        <div class="tabs">
          <button class="tab active">Paragraph <svg class="burger"><use href="#i-menu"/></svg></button>
          <button class="tab">Align</button>
        </div>
        <div class="aligns">
          <button class="on" aria-label="Left align"><svg><use href="#i-al"/></svg></button>
          <button aria-label="Center"><svg><use href="#i-ac"/></svg></button>
          <button aria-label="Right align"><svg><use href="#i-ar"/></svg></button>
          <button class="next" aria-label="Justify last left"><svg><use href="#i-jl"/></svg></button>
          <button aria-label="Justify last centered"><svg><use href="#i-jc"/></svg></button>
          <button aria-label="Justify last right"><svg><use href="#i-jr"/></svg></button>
          <button class="next" aria-label="Justify all"><svg><use href="#i-jf"/></svg></button>
        </div>
        <div class="indents">
          <div><svg><use href="#i-indent"/></svg><b>0</b> px</div>
          <div><svg><use href="#i-before"/></svg><b>0</b> px</div>
          <div><svg><use href="#i-before"/></svg><b>0</b> px</div>
          <div><svg><use href="#i-outdent"/></svg><b>0</b> px</div>
          <div><svg><use href="#i-after"/></svg><b>0</b> px</div>
        </div>
      </section>
    </aside>
  </div>

  <!-- keyframe context menu -->
  <div class="context-menu keyframe-menu">
    <button disabled>0.0%</button>
    <button disabled>Edit Value...</button>
    <button disabled>Go To Keyframe Time</button>
    <hr>
    <button>Select Equal Keyframes</button>
    <button>Select Previous Keyframes</button>
    <button>Select Following Keyframes</button>
    <hr>
    <button>Toggle Hold Keyframe</button>
    <button>Keyframe Interpolation...</button>
    <button disabled>Rove Across Time</button>
    <button>Keyframe Velocity...</button>
    <button class="hover">Keyframe Assistant <span>›</span></button>
  </div>
  <div class="context-menu assistant-menu">
    <button disabled>Convert Audio to Keyframes</button>
    <button disabled>Convert Expression to Keyframes</button>
    <button class="hover">Easy Ease <span>F9</span></button>
    <button>Easy Ease In <span>Shift+F9</span></button>
    <button>Easy Ease Out <span>Ctrl+Shift+F9</span></button>
    <button disabled>Exponential Scale</button>
    <button disabled>RPF Camera Import</button>
    <button disabled>Sequence Layers...</button>
    <button>Time-Reverse Keyframes</button>
  </div>
  <svg class="cursor" viewBox="0 0 8 12"><path d="M.5.500v9.500l2.200-2 1.500 3.500 1.500-.7-1.500-3.300h3z" fill="#fff" stroke="#555" stroke-width=".8"/></svg>
</body>
</html>
```

FILE: styles.css
```css
:root {
  --panel: #262626;
  --dark: #1c1c1c;
  --text: #a6a6a6;
  --bright: #d0d0d0;
  --blue: #3f93b8;
  --cyan: #35a5c6;
  --tan: #a89a86;
  --purple: #736fd6;
}

* {
  box-sizing: border-box;
}

body {
  margin: 0;
  padding: 14px 0;
  min-height: 100vh;
  display: flex;
  flex-direction: column;
  background: #000;
  color: var(--text);
  font: 8px/9px Roboto, "Open Sans", sans-serif;
  overflow: hidden;
}

h1, h2, p, ul {
  margin: 0;
  padding: 0;
  font-size: 8px;
  font-weight: normal;
}

button, input, select {
  font: inherit;
  color: inherit;
  background: none;
  border: 0;
  padding: 0;
  margin: 0;
  border-radius: 0;
  appearance: none;
  outline: 0;
}

button {
  display: flex;
  align-items: center;
  white-space: nowrap;
}

a {
  color: var(--blue);
  text-decoration: none;
}

svg {
  width: 9px;
  height: 9px;
  flex: none;
  display: block;
}

s, i.cell {
  width: 10px;
  flex: none;
}

.sprite {
  position: absolute;
  width: 0;
  height: 0;
}

.on {
  color: var(--cyan);
}

.burger {
  width: 6px;
  height: 7px;
  color: #bbb;
}

.chip {
  width: 6px;
  height: 6px;
  flex: none;
  display: block;
  background: var(--tan);
}

.chip.purple {
  background: var(--purple);
}

.tri {
  border: 3px solid transparent;
  border-left: 5px solid #bbb;
  border-right: 0;
  margin: 0 2px;
}

.tri.down {
  border: 3px solid transparent;
  border-top: 5px solid #bbb;
  border-bottom: 0;
  margin: 0 2px 0 1px;
}

.pick {
  display: flex;
  align-items: center;
  background: #202020;
  color: var(--bright);
}

.pick select {
  flex: 1;
  min-width: 0;
  height: 11px;
}

.pick::after {
  content: "";
  border: 3px solid transparent;
  border-top: 4px solid #ccc;
  border-bottom: 0;
}

.search {
  display: flex;
  align-items: center;
  background: #1f1f1f;
}

.search input {
  flex: 1;
  min-width: 0;
}

.find {
  width: 13px;
  height: 10px;
  color: #bbb;
}

.close {
  color: #888;
}

/* Title and menus */
.titlebar {
  display: flex;
  align-items: center;
  height: 16px;
  background: #d9365b;
  color: #f6dbe1;
}

.app-logo {
  width: 10px;
  height: 9px;
  margin: 0 3px 0 2px;
  background: #23103f;
  color: #b48cf0;
  font-size: 6px;
  text-align: center;
}

.window-buttons {
  margin-left: auto;
  display: flex;
  gap: 20px;
  padding-right: 12px;
  color: #fff;
}

.window-buttons svg {
  width: 10px;
  height: 10px;
}

.menubar {
  display: flex;
  align-items: center;
  gap: 9px;
  height: 13px;
  padding-left: 5px;
  background: #fefefe;
  color: #333;
}

/* Toolbar */
.toolbar {
  display: flex;
  align-items: center;
  height: 17px;
  margin-bottom: 3px;
  padding-left: 7px;
  background: var(--panel);
}

.tools {
  display: flex;
  margin-right: 4px;
  color: #b8b8b8;
}

.tools button {
  width: 17px;
  justify-content: center;
}

.tools svg {
  width: 12px;
  height: 12px;
}

.tools .more::after {
  content: "";
  align-self: flex-end;
  border-left: 3px solid transparent;
  border-bottom: 3px solid #999;
  margin-right: -3px;
}

.tools .on {
  color: var(--cyan);
}

.axes {
  display: flex;
  gap: 5px;
  margin-left: 28px;
  width: 54px;
  color: #5c5c5c;
}

.axes svg, .snap-icons svg {
  width: 10px;
  height: 10px;
}

.snapping {
  display: flex;
  align-items: center;
  gap: 3px;
  width: 49px;
}

.snapping input {
  width: 7px;
  height: 9px;
}

.snapping input:checked::after {
  content: "✓";
  color: #ddd;
  font-weight: bold;
}

.snap-icons {
  display: flex;
  gap: 6px;
  width: 43px;
}

.paint {
  display: flex;
  align-items: center;
  gap: 3px;
}

.paint.fill {
  width: 38px;
}

.paint.stroke {
  width: 51px;
}

.paint.width {
  width: 33px;
}

.num {
  color: var(--blue);
}

.swatch-fill, .swatch-stroke {
  width: 15px;
  height: 11px;
  background: #4a4446;
}

.swatch-stroke {
  background: #222;
  border: 2px solid #fff;
}

.go {
  width: 8px;
  height: 8px;
  color: #c4c4c4;
}

.workspaces {
  display: flex;
  align-items: center;
  height: 17px;
  margin-left: auto;
  padding-left: 15px;
  border-left: 1px solid #1a1a1a;
}

.ws-essentials {
  width: 65px;
}

.ws-standard {
  width: 61px;
  gap: 8px;
  color: var(--blue);
}

.ws-standard .burger {
  color: var(--blue);
}

.ws-small {
  width: 69px;
}

.ws-more {
  width: 17px;
  font-size: 14px;
  color: #ccc;
}

.help {
  display: flex;
  align-items: center;
  gap: 7px;
  width: 154px;
  color: #d6d6d6;
}

.help .sync {
  width: 14px;
  height: 9px;
}

.help input {
  flex: 1;
  min-width: 0;
}

/* Workspace */
.workspace {
  flex: 1;
  display: flex;
  gap: 3px;
  min-height: 0;
}

.main-area {
  flex: 1;
  display: flex;
  flex-direction: column;
  gap: 3px;
  min-width: 0;
}

.upper {
  flex: 1;
  display: flex;
  gap: 3px;
  min-height: 0;
}

.panel {
  background: var(--panel);
  display: flex;
  flex-direction: column;
}

.tabs {
  display: flex;
  height: 18px;
  flex: none;
  background: var(--dark);
}

.tab {
  gap: 7px;
  padding: 0 8px;
  color: #777;
}

.tab.active {
  background: var(--panel);
  color: var(--bright);
  font-weight: 500;
}

.panel-foot {
  display: flex;
  align-items: center;
  height: 15px;
  margin-top: auto;
  border-top: 1px solid #1a1a1a;
}

/* Project panel */
.project {
  width: 214px;
}

.project .tab + .tab {
  padding-left: 14px;
}

.comp-info {
  display: flex;
  gap: 4px;
  padding: 4px 5px 0;
}

.comp-info .tri {
  display: inline-block;
}

.thumb {
  width: 75px;
  height: 43px;
  background: #000;
}

.project .search {
  height: 15px;
  margin: 27px 4px 4px 0;
  padding-left: 8px;
}

.items {
  table-layout: fixed;
  width: 100%;
  border-collapse: collapse;
}

.items th {
  height: 12px;
  padding: 0;
  background: #323232;
  font-size: 7px;
  font-weight: normal;
  text-align: left;
}

.c-name {
  width: 82px;
  padding-left: 15px !important;
}

.c-tag {
  width: 16px;
}

.c-type {
  width: 50px;
}

.c-size {
  width: 32px;
}

.c-rate {
  width: 23px;
  white-space: nowrap;
}

.sort {
  display: inline-block;
  margin-left: 35px;
  border: 3px solid transparent;
  border-bottom: 4px solid #777;
  border-top: 0;
}

.items td {
  height: 13px;
  padding: 0;
}

.items td:first-child {
  display: flex;
  align-items: center;
  padding-left: 12px;
}

.items td span {
  flex: 1;
  padding: 1px 1px 2px;
}

.items .chip {
  margin-left: 1px;
}

.comp-icon {
  width: 11px;
  height: 9px;
}

.selected {
  background: #303030;
}

.items .selected span {
  background: #a2a2a2;
  color: #222;
  font-weight: 500;
  margin-right: 2px;
}

.project-foot {
  gap: 8px;
  padding-left: 3px;
}

.project-foot svg, .viewer-foot svg {
  width: 10px;
  height: 10px;
}

.bpc {
  width: 22px;
}

.foot-scroll {
  width: 66px;
  height: 100%;
  margin: 0 11px 0 auto;
  background: var(--dark);
}

/* Composition viewer */
.viewer {
  flex: 1;
  min-width: 0;
}

.viewer-tab {
  display: flex;
  align-items: center;
  gap: 6px;
  height: 18px;
  padding-left: 6px;
  color: var(--bright);
  font-weight: 500;
}

.viewer-tab .lock {
  width: 8px;
  height: 8px;
}

.viewer-tab .burger {
  margin-left: 0;
}

.crumbs {
  height: 16px;
  padding: 2px 12px;
  border-bottom: 1px solid #1a1a1a;
}

.crumbs button {
  height: 11px;
  padding: 0 7px;
  background: #000;
  color: #4aa3cc;
}

.stage {
  flex: 1;
  min-height: 0;
  display: flex;
  justify-content: center;
  margin-top: 1px;
}

.canvas {
  width: 640px;
  height: 100%;
}

.viewer-foot {
  height: 18px;
  gap: 4px;
  padding-left: 3px;
}

.viewer-foot .pick {
  margin: 0 2px 0 4px;
  background: none;
}

.zoom-pick {
  width: 38px;
}

.foot-time {
  width: 39px;
  margin-left: 4px;
  color: var(--bright);
}

.res-pick {
  width: 51px;
}

.cam-pick {
  width: 100px;
}

.dim {
  color: #666;
}

/* Timeline */
.timeline {
  display: flex;
  flex-direction: column;
  height: 228px;
  background: var(--panel);
}

.tl-tabs {
  display: flex;
  height: 19px;
  background: var(--dark);
  border-bottom: 1px solid #2b7186;
}

.tl-tab {
  color: #777;
}

.queue {
  width: 104px;
  padding-left: 19px;
}

.comp1 {
  width: 60px;
  gap: 8px;
}

.current {
  gap: 6px;
  height: 19px;
  padding: 0 6px;
  background: var(--panel);
  border: 1px solid #2b7186;
  border-bottom: 0;
  color: var(--bright);
  font-weight: 500;
}

.tl-body {
  flex: 1;
  display: flex;
  min-height: 0;
  border-left: 2px solid #2b5f72;
}

.tl-left {
  width: 355px;
  border-right: 1px solid #111;
}

.tl-head {
  display: flex;
  height: 24px;
}

.timecode {
  display: flex;
  flex-direction: column;
  width: 70px;
  padding: 2px 0 0 6px;
  color: #45a9cc;
}

.timecode b {
  font-size: 11px;
  line-height: 11px;
}

.timecode small {
  font-size: 7px;
  line-height: 8px;
}

.tl-head .search {
  width: 150px;
  height: 16px;
  margin: 3px 0;
  padding-left: 2px;
}

.tl-buttons {
  display: flex;
  gap: 12px;
  padding-left: 9px;
  color: #b4b4b4;
}

.tl-buttons svg {
  width: 11px;
  height: 11px;
}

.tl-buttons button:nth-child(3),
.tl-buttons button:nth-child(4) {
  margin-right: -5px;
}

.tl-row {
  display: grid;
  grid-template-columns: 43px 25px 22px 86px 84px 1fr;
  align-items: center;
  height: 12px;
  background: #323232;
}

.tl-row > div, .prop > div {
  display: flex;
  align-items: center;
  height: 100%;
}

.tl-row.cols {
  font-size: 7px;
  border-bottom: 1px solid #1c1c1c;
}

.tl-row.layer {
  height: 11px;
  background: #454545;
  color: var(--bright);
}

.av {
  gap: 1px;
  padding-left: 2px;
}

.av s {
  width: 7px;
}

i.cell, svg.cell {
  width: 9px;
  height: 9px;
  background: #242424;
}

.label {
  gap: 3px;
  padding-left: 2px;
}

.cols .label {
  padding-left: 11px;
}

.layer .chip {
  width: 8px;
  height: 8px;
}

.idx {
  padding-left: 2px;
}

.cols .name {
  padding-left: 1px;
}

.layer .name {
  gap: 2px;
}

.layer .name svg {
  width: 7px;
  height: 7px;
  margin-left: 1px;
}

.layer .name input {
  width: 74px;
  height: 10px;
  padding-left: 1px;
  border: 1px solid #aaa;
  background: #555;
  color: #ddd;
}

.switches {
  gap: 1px;
  padding-left: 3px;
}

.switches em {
  width: 9px;
  font: italic bold 9px/9px "Liberation Serif", serif;
}

.faint {
  opacity: 0.4;
}

.layer .parent {
  gap: 5px;
  padding-left: 8px;
}

.cols .parent {
  padding-left: 10px;
}

.parent .pick {
  width: 61px;
  padding: 0 3px 0 4px;
}

.props {
  display: grid;
  grid-template-rows: repeat(8, 1fr);
  height: 91px;
}

.prop {
  display: grid;
  grid-template-columns: 43px 131px 88px;
}

.kfnav {
  width: 24px;
  height: 7px;
  margin-left: 2px;
  color: #bbb;
}

.in1 {
  padding-left: 15px;
}

.in2 {
  padding-left: 26px;
}

.in3 {
  padding-left: 48px;
  gap: 3px;
}

.hl {
  flex: 1;
  height: 11px;
  padding: 1px 2px;
  background: #474747;
}

.pname .tri {
  margin-right: 5px;
}

.pval {
  padding-left: 4px;
}

.pval.add {
  justify-content: flex-end;
  gap: 3px;
}

.pval .pick {
  flex: 1;
  padding: 0 3px 0 4px;
}

.tl-right {
  flex: 1;
  display: flex;
  flex-direction: column;
  position: relative;
  min-width: 0;
  padding-left: 4px;
}

.nav {
  height: 12px;
  background: #202020;
  margin-left: -4px;
  padding-top: 4px;
}

.nav-bar {
  width: 13%;
  height: 5px;
  margin-left: 1px;
  background: #606060;
  border: solid var(--cyan);
  border-width: 0 4px;
  border-radius: 2px;
}

.ruler {
  display: grid;
  grid-template-columns: repeat(11, 3fr) 1fr;
  height: 10px;
  font-size: 7px;
  line-height: 7px;
  background: #202020;
  margin-left: -4px;
  padding-left: 4px;
}

.ruler span {
  width: 0;
  display: flex;
  flex-direction: column;
  align-items: center;
}

.ruler span::after {
  content: "";
  width: 1px;
  flex: 1;
  background: #777;
}

.work-area {
  height: 12px;
}

.work-area div {
  width: 35.300%;
  height: 100%;
  background: #5c5c5c;
  border-left: 1px solid #999;
}

.work-area div::before {
  content: "";
  display: block;
  width: 4px;
  height: 10px;
  margin-left: -5px;
  border-radius: 3px 0 0 3px;
  background: var(--cyan);
}

.cache {
  height: 2px;
  background: #25c02c;
}

.layer-bar {
  height: 11px;
  background: linear-gradient(#8480b8, #6661d0 40%, #5651b8);
}

.tracks {
  flex: 1;
  position: relative;
}

.track-rows {
  display: grid;
  grid-template-rows: repeat(8, 1fr);
  width: 35.300%;
  height: 91px;
  background: #343434;
}

.track-rows div {
  border-bottom: 1px solid #272727;
}

.tracks::before {
  content: "";
  position: absolute;
  top: 91px;
  bottom: 0;
  width: 35.300%;
  background: #343434;
}

.frame-now {
  position: absolute;
  top: 0;
  bottom: 0;
  left: calc(var(--f) * 100% / 56.670);
  width: calc(100% / 56.670);
  background: #484b4d;
  opacity: 0.8;
}

.key, .ibeam {
  position: absolute;
  left: calc(var(--f) * 100% / 56.670);
  top: calc(var(--row) * 91px / 8 + 2px);
  width: 7px;
  height: 7px;
  margin-left: -3px;
}

.ibeam {
  width: 6px;
  height: 8px;
  color: #a8b4ba;
  z-index: 1;
}

.r1 { --row: 0; }
.r2 { --row: 1; }
.r3 { --row: 2; }
.r4 { --row: 3; }
.r5 { --row: 4; }
.r6 { --row: 5; color: #4f93ab; }
.r8 { --row: 7; }

.playhead {
  position: absolute;
  top: 12px;
  bottom: 0;
  left: calc(4px + var(--f) * (100% - 4px) / 56.670);
  width: 1px;
  background: #4b92ab;
}

.playhead svg {
  width: 9px;
  height: 10px;
  margin-left: -4px;
  color: #3fb4d4;
}

.tl-gutter {
  display: flex;
  flex-direction: column;
  align-items: center;
  gap: 3px;
  width: 12px;
  padding-top: 24px;
  background: var(--dark);
  border-right: 1px solid #2b5f72;
  color: #aaa;
}

.tl-foot {
  display: flex;
  align-items: center;
  gap: 3px;
  height: 11px;
  padding-left: 4px;
  border-top: 1px solid #111;
}

.toggle {
  margin-left: 147px;
  color: var(--bright);
  font-size: 7px;
  font-weight: 500;
}

/* Right side panels */
.side {
  width: 138px;
  display: flex;
  flex-direction: column;
  gap: 3px;
}

.side h2 {
  display: flex;
  align-items: center;
  gap: 7px;
  height: 18px;
  padding-left: 8px;
  color: var(--bright);
  font-weight: 500;
}

.info {
  height: 94px;
}

.info-body {
  display: flex;
  padding: 3px 5px;
}

.info-chip {
  width: 13px;
  height: 13px;
  margin: 9px 4px 0 0;
  background: #000;
}

.info-body p {
  width: 51px;
}

.info-body .plus {
  width: 7px;
  height: 7px;
  margin: 15px 3px 0 0;
}

.preview {
  height: 37px;
}

.transport {
  display: flex;
  gap: 6px;
  padding: 4px 5px;
  color: #bbb;
}

.transport svg {
  width: 11px;
  height: 11px;
}

.transport .loop {
  margin-left: 16px;
}

.character {
  height: 165px;
}

.font-row {
  display: flex;
  align-items: flex-start;
  gap: 4px;
  height: 38px;
  padding: 5px 0 0 7px;
}

.font-picks {
  width: 77px;
}

.font-picks .pick {
  height: 15px;
  margin-bottom: 1px;
}

.font-mini svg {
  width: 12px;
  height: 12px;
}

.bw {
  display: block;
  width: 13px;
  height: 11px;
  margin-top: 5px;
  border: 1px solid #ccc;
  background: linear-gradient(#000 50%, #fff 50%);
}

.colors {
  width: 28px;
  height: 28px;
}

.char-grid {
  display: grid;
  grid-template-columns: 16px 29px 25px 20px 32px 6px;
  grid-auto-rows: 14px;
  align-items: center;
  padding: 2px 0 4px 4px;
}

.char-grid svg {
  width: 12px;
  height: 12px;
}

.char-grid b, .indents b {
  color: var(--blue);
  font-weight: normal;
}

.off {
  color: #555;
}

.drop {
  width: 0;
  border: 2px solid transparent;
  border-top: 4px solid #777;
  border-bottom: 0;
}

.char-stroke {
  display: grid;
  grid-template-columns: 16px 29px 10px 1fr;
  align-items: center;
  height: 20px;
  margin: 0 4px;
  border: solid #202020;
  border-width: 1px 0;
}

.char-stroke .pick {
  margin-left: 4px;
}

.faux {
  display: flex;
  gap: 7px;
  margin-top: 2px;
  padding: 2px 0 0 18px;
  border-top: 1px solid #202020;
  font: bold 10px/13px "Liberation Serif", serif;
  color: #bbb;
}

.faux button {
  width: 12px;
  justify-content: center;
}

.faux small, .faux sup, .faux sub {
  font-size: 7px;
  line-height: 7px;
}

.faux sup {
  align-self: flex-start;
}

.faux sub {
  align-self: flex-end;
}

.effects {
  height: 107px;
}

.tabs-more {
  margin: 4px 3px 0 auto;
  font-size: 14px;
  color: #ccc;
}

.effects .search {
  height: 15px;
  margin: 1px 0 2px;
  padding-left: 7px;
}

.effects-list {
  flex: 1;
  display: flex;
  min-height: 0;
  overflow: hidden;
}

.effects-list ul {
  flex: 1;
  list-style: none;
}

.effects-list li {
  height: 11px;
  line-height: 11px;
  padding-left: 4px;
}

.effects-list li::before {
  content: "";
  display: inline-block;
  margin-right: 2px;
  border: 3px solid transparent;
  border-left: 5px solid #bbb;
  border-right: 0;
}

.scroll {
  width: 11px;
  background: linear-gradient(#2e2e2e 14px, #181818 14px);
}

.effects footer {
  display: flex;
  justify-content: flex-end;
  height: 12px;
  padding: 2px 17px 0 0;
  border-top: 1px solid #1a1a1a;
  color: #bbb;
}

.paragraph {
  flex: 1;
}

.aligns {
  display: flex;
  gap: 6px;
  padding: 5px 6px;
  color: #b0b0b0;
}

.aligns svg {
  width: 11px;
  height: 10px;
}

.aligns .on {
  color: var(--cyan);
}

.aligns .next {
  margin-left: 3px;
}

.indents {
  display: grid;
  grid-template-columns: 48px 44px 1fr;
  gap: 3px 0;
  margin-top: 1px;
  padding: 2px 0 0 5px;
  border-top: 1px solid #202020;
}

.indents div {
  display: flex;
  align-items: center;
  gap: 3px;
  height: 10px;
}

.indents svg {
  width: 11px;
  height: 10px;
}

/* Context menus */
.context-menu {
  position: absolute;
  display: flex;
  flex-direction: column;
  padding: 1px 2px;
  background: #f0f0f0;
  border: 1px solid #d4d4d4;
  color: #222;
}

.context-menu button {
  flex: 1;
  padding-left: 20px;
}

.context-menu button:disabled {
  color: #888;
}

.context-menu .hover {
  background: #91c9f2;
}

.context-menu span {
  margin-left: auto;
}

.context-menu hr {
  width: 130px;
  margin: 2px 2px 2px 20px;
  border: 0;
  border-top: 1px solid #ccc;
}

.keyframe-menu {
  left: 553px;
  top: 409px;
  width: 156px;
  height: 176px;
}

.keyframe-menu span {
  padding-right: 6px;
}

.assistant-menu {
  left: 705px;
  top: 565px;
  width: 222px;
  height: 136px;
}

.assistant-menu span {
  padding-right: 11px;
}

.cursor {
  position: absolute;
  left: 782px;
  top: 607px;
  width: 8px;
  height: 12px;
}
```
